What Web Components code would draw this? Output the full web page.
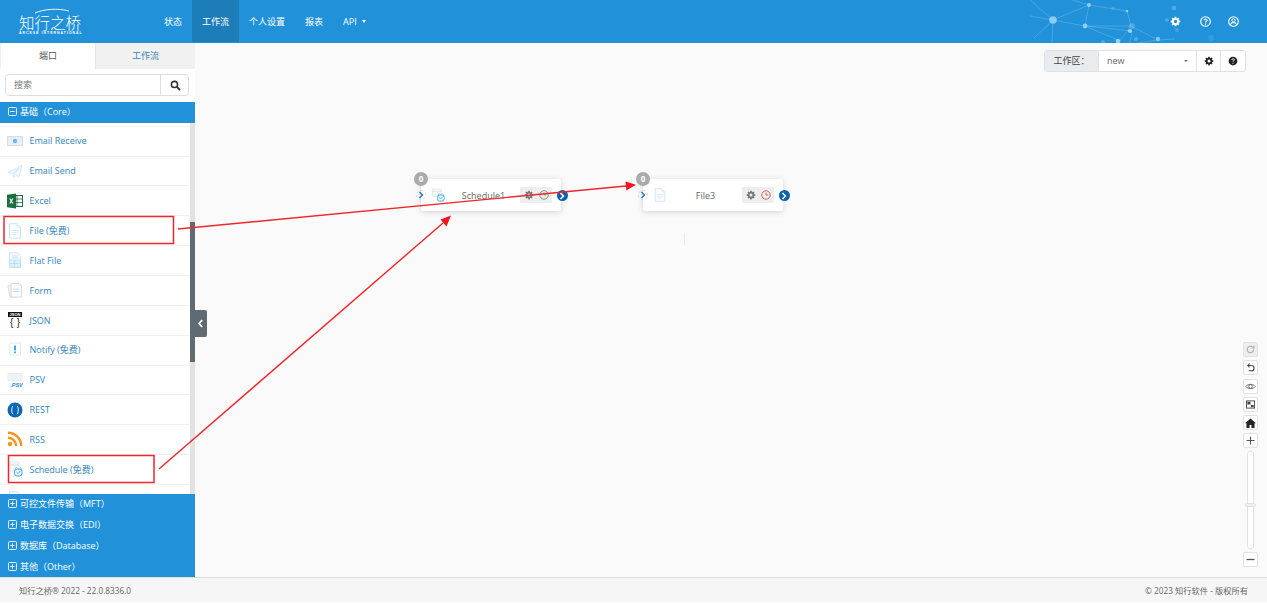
<!DOCTYPE html>
<html lang="zh">
<head>
<meta charset="utf-8">
<title>知行之桥</title>
<style>
    html, body { margin: 0; height: 603px; overflow: hidden; background: #fff; }
    body { font-family: "Open Sans", "Noto Sans CJK SC", sans-serif; font-size: 9px; }
    app-shell { height: 602px; }
</style>
</head>
<body>
<app-shell>
    <app-header slot="header"></app-header>
    <side-panel slot="side">
        <group-head open>基础（Core）</group-head>
        <tool-list slot="list">
            <tool-item icon="receive">Email Receive</tool-item>
            <tool-item icon="send">Email Send</tool-item>
            <tool-item icon="excel">Excel</tool-item>
            <tool-item icon="file">File (免费)</tool-item>
            <tool-item icon="flat">Flat File</tool-item>
            <tool-item icon="form">Form</tool-item>
            <tool-item icon="json">JSON</tool-item>
            <tool-item icon="notify">Notify (免费)</tool-item>
            <tool-item icon="psv">PSV</tool-item>
            <tool-item icon="rest">REST</tool-item>
            <tool-item icon="rss">RSS</tool-item>
            <tool-item icon="schedule">Schedule (免费)</tool-item>
            <tool-item icon="flat"></tool-item>
        </tool-list>
        <group-head slot="bottom">可控文件传输（MFT）</group-head>
        <group-head slot="bottom">电子数据交换（EDI）</group-head>
        <group-head slot="bottom">数据库（Database）</group-head>
        <group-head slot="bottom">其他（Other）</group-head>
    </side-panel>
    <flow-canvas slot="main">
        <flow-node style="left:226px;top:136px" icon="schedule" clock="#6f9f78">Schedule1</flow-node>
        <flow-node style="left:448px;top:136px" icon="file" clock="#d0646a">File3</flow-node>
    </flow-canvas>
    <app-footer slot="footer"></app-footer>
</app-shell>
<red-notes></red-notes>

<script>
const ICONS = {
    gear: `<path fill="currentColor" fill-rule="evenodd" d="M6.900 1h2.200l.3 1.900 1.200.5 1.600-1.100 1.500 1.500-1.100 1.600.5 1.200 1.900.3v2.200l-1.900.3-.5 1.200 1.100 1.600-1.500 1.500-1.600-1.100-1.200.5-.3 1.900H6.900l-.3-1.900-1.200-.5-1.600 1.100-1.500-1.500 1.100-1.600-.5-1.200L1 9.100V6.900l1.900-.3.5-1.200-1.100-1.600 1.500-1.500 1.600 1.100 1.200-.5zM8 5.600a2.400 2.400 0 1 0 0 4.800 2.400 2.400 0 0 0 0-4.800z"/>`,
    help: `<circle cx="8" cy="8" r="7" fill="currentColor"/><path d="M5.900 6.200c.2-1.200 1-1.800 2.100-1.800 1.200 0 2.100.7 2.100 1.800 0 1.600-2.100 1.500-2.100 3" fill="none" stroke="#fff" stroke-width="1.500"/><circle cx="8" cy="11.500" r=".9" fill="#fff"/>`,
    receive: `<rect x=".5" y="3.500" width="15" height="9" fill="#e8f1f7" stroke="#d5dde2"/><circle cx="8" cy="8" r="2.200" fill="#6dbbe9"/><path d="M.5 3.500 5 7M15.500 3.500 11 7" stroke="#e0e8ed" fill="none"/>`,
    send: `<path d="M15 2.500 1 9.500l4 1.500L12 5.500 6.500 12v2.500L9 12.500l3 1z" fill="#f4f9fc" stroke="#c6e2f1" stroke-width=".8"/>`,
    excel: `<rect x="5" y="2.500" width="10.500" height="11" fill="#fff" stroke="#1d6f42"/><path d="M5 6h10M5 9.500h10M10 2.500v11" stroke="#1d6f42" stroke-width=".8"/><path d="M0 1.800 9 .5v15L0 14.200z" fill="#1d6f42"/><path d="m2.800 5.500 3 5M5.800 5.500l-3 5" stroke="#fff" stroke-width="1.100"/>`,
    file: `<path d="M2.500.8h7.500l3.500 3.500v10.900h-11z" fill="#fdfeff" stroke="#c6e6f7"/><path d="M10 .8v3.500h3.500M4.500 7.500h7M4.500 9.500h7M4.500 11.500h5" fill="none" stroke="#d4ebf9" stroke-width=".9"/>`,
    flat: `<path d="M2.500.8h8l3 3v11.400h-11z" fill="#f7fbfe" stroke="#cbe6f6"/><path d="M2.500 8h11v7.200h-11zM2.500 11.500h11M7.500 8v7.200M5 4h6M5 6h6" fill="#dff1fb" stroke="#b4ddf3" stroke-width=".8"/>`,
    form: `<path d="M.8 4 7 1.500l7 1v12L3 15.300z" fill="#f1f3f4" stroke="#d5d9dc" stroke-width=".8"/><path d="M4 1.500h8l2.500 2.500v11H4z" fill="#fbfcfc" stroke="#cfd6da" stroke-width=".8"/><path d="M6 7h6M6 9.500h6" stroke="#cfe6f4"/>`,
    json: `<rect x="1" y="0" width="14" height="5" fill="#111"/><text x="8" y="4.200" font-size="4" font-weight="700" text-anchor="middle" fill="#fff" font-family="Liberation Sans">JSON</text><text x="4.600" y="13.800" font-size="10" text-anchor="middle" fill="#222" font-family="Liberation Sans">{</text><text x="11.400" y="13.800" font-size="10" text-anchor="middle" fill="#222" font-family="Liberation Sans">}</text>`,
    notify: `<path d="M2.500 1h11v12H10l-2 2-2-2H2.500z" fill="#fcfdfe" stroke="#e6ebef"/><rect x="7.200" y="3.500" width="1.600" height="5" fill="#1f93dc"/><rect x="7.200" y="9.500" width="1.600" height="1.700" fill="#1f93dc"/>`,
    psv: `<rect x=".5" y="1" width="15" height="8" fill="#e9edf1"/><path d="M.5 3h15M.5 5h15M.5 7h15" stroke="#fff" stroke-width=".7"/><text x="9.500" y="14.500" font-size="5.500" font-weight="700" font-style="italic" text-anchor="middle" fill="#2b8ed4" font-family="Liberation Sans">.PSV</text>`,
    rest: `<circle cx="8" cy="8" r="7.500" fill="#0c66b3"/><path d="M5.800 3.800C4.300 6 4.300 10 5.800 12.200M10.200 3.800c1.500 2.200 1.500 6.200 0 8.400" fill="none" stroke="#fff" stroke-width=".9"/>`,
    rss: `<circle cx="3" cy="13" r="2.200" fill="#f7931e"/><path d="M1 6.800A8.200 8.200 0 0 1 9.200 15M1 1.800A13.200 13.200 0 0 1 14.200 15" fill="none" stroke="#f7931e" stroke-width="2.500"/>`,
    schedule: `<path d="M1.500 1h10.500v3H1.500zM1.500 4h10.500v6H1.500z" fill="#f4f6f8" stroke="#e0e5e9" stroke-width=".8"/><rect x="7.500" y="8" width="7.500" height="7" rx="2.500" fill="#eaf6fd" stroke="#36a2e2"/><path d="M8 7.500 9.500 6.500M14.500 7.500 13 6.500M9.500 11l1.600 1.500L13.200 10" fill="none" stroke="#36a2e2" stroke-width=".8"/>`
}

function icon (name, size = 16) {
    return `<svg width="${size}" height="${size}" viewBox="0 0 16 16">${ICONS[name] || ""}</svg>`
}

class AppShell extends HTMLElement {
    constructor () {
        super()
        this.root = this.attachShadow({mode: "open"})
        this.root.innerHTML = `
        <style>
            :host {
                display: grid;
                grid-template-columns: 195px 1fr;
                grid-template-rows: 43px 1fr 25px;
            }
            .top, .bottom { grid-column: 1 / 3; min-width: 0; }
            .side, .main { min-height: 0; min-width: 0; display: flex; }
        </style>
        <div class="top"><slot name="header"></slot></div>
        <div class="side"><slot name="side"></slot></div>
        <div class="main"><slot name="main"></slot></div>
        <div class="bottom"><slot name="footer"></slot></div>
        `
    }
}

class AppHeader extends HTMLElement {
    constructor () {
        super()
        this.root = this.attachShadow({mode: "open"})
        this.root.innerHTML = `
        <style>
            :host {
                display: flex;
                position: relative;
                height: 43px;
                background: #2192d9;
                color: #fff;
                overflow: hidden;
            }
            .logo {
                width: 154px;
                position: relative;
                flex: none;
            }
            .logo svg { position: absolute; left: 34px; top: 8px; }
            .logo b {
                position: absolute;
                left: 19px;
                top: 11px;
                font: 300 15.500px/22px "Noto Sans CJK SC", sans-serif;
                white-space: nowrap;
            }
            .logo i {
                position: absolute;
                left: 19px;
                top: 31px;
                font: normal 700 3.400px/4px "Liberation Sans", sans-serif;
                letter-spacing: 1.050px;
                white-space: nowrap;
            }
            nav { display: flex; }
            nav a {
                display: flex;
                align-items: center;
                gap: 5px;
                padding: 0 10px;
                font-size: 9px;
                margin-bottom: 1px;
            }
            nav a.on { background: #1c7db9; }
            nav a span {
                border-top: 3px solid #fff;
                border-left: 2.500px solid transparent;
                border-right: 2.500px solid transparent;
            }
            .net { position: absolute; left: 1020px; top: 0; }
            .tools {
                margin-left: auto;
                display: flex;
                align-items: center;
                padding: 0 28.500px 0 0;
                position: relative;
            }
            .tools svg { display: block; }
            .tools svg + svg { margin-left: 19px; }
            .tools svg + svg + svg { margin-left: 17px; }
        </style>
        <div class="logo">
            <svg width="36" height="6" viewBox="0 0 36 6"><path d="M1 5C10 1 24 0 35 3" fill="none" stroke="#fff" stroke-width=".9"/></svg>
            <b>知行之桥</b>
            <i>ARCESB INTERNATIONAL</i>
        </div>
        <nav>
            <a>状态</a>
            <a class="on">工作流</a>
            <a>个人设置</a>
            <a>报表</a>
            <a>API <span></span></a>
        </nav>
        <svg class="net" width="200" height="43" viewBox="1020 0 200 43">
            <g stroke="#9fd3f2" stroke-opacity=".38" stroke-width=".8" fill="none">
                <path d="M1030 0 1053 20 1089 5 1085 26 1053 20 1052 43M1089 5 1127 11M1085 26 1131 26 1118 43M1085 26 1118 40M1085 26 1132 31 1130 43M1053 20 1030 16M1053 20 1034 38M1072 0 1089 5M1131 26 1158 40 1175 39M1158 40 1138 43M1131 26 1127 11"/>
            </g>
            <g fill="#a8dafa">
                <circle cx="1053" cy="20" r="3.800" opacity=".75"/>
                <circle cx="1089" cy="5" r="2" opacity=".8"/>
                <circle cx="1085" cy="26" r="2.400" opacity=".8"/>
                <circle cx="1127" cy="11" r="1.300" opacity=".8"/>
                <circle cx="1113" cy="8" r="1.800" opacity=".25"/>
                <circle cx="1132" cy="26" r="3" opacity=".3"/>
                <circle cx="1130" cy="31" r="2" opacity=".9"/>
                <circle cx="1118" cy="41" r="2.300" opacity=".85"/>
                <circle cx="1158" cy="39" r="2.200" opacity=".7"/>
                <circle cx="1136" cy="39" r="2" opacity=".35"/>
                <circle cx="1103" cy="42" r="2" opacity=".3"/>
                <circle cx="1174" cy="8" r="2.300" opacity=".35"/>
                <circle cx="1167" cy="20" r="2" opacity=".3"/>
                <circle cx="1177" cy="30" r="2" opacity=".25"/>
                <circle cx="1211" cy="38" r="3" opacity=".15"/>
            </g>
        </svg>
        <div class="tools">
            ${icon("gear", 11)}
            <svg width="11" height="11" viewBox="0 0 16 16"><circle cx="8" cy="8" r="7" fill="none" stroke="#fff" stroke-width="1.600"/><path d="M5.700 6.300C5.900 5 6.800 4.400 8 4.400c1.300 0 2.300.7 2.300 1.900 0 1.700-2.300 1.600-2.300 3.100" fill="none" stroke="#fff" stroke-width="1.500"/><circle cx="8" cy="11.700" r="1" fill="#fff"/></svg>
            <svg width="11" height="11" viewBox="0 0 16 16"><circle cx="8" cy="8" r="7" fill="none" stroke="#fff" stroke-width="1.600"/><circle cx="8" cy="6.300" r="2.400" fill="none" stroke="#fff" stroke-width="1.400"/><path d="M3.500 12.500c1-2.200 2.700-2.900 4.500-2.900s3.500.7 4.500 2.900" fill="none" stroke="#fff" stroke-width="1.500"/></svg>
        </div>
        `
    }
}

class SidePanel extends HTMLElement {
    constructor () {
        super()
        this.root = this.attachShadow({mode: "open"})
        this.root.innerHTML = `
        <style>
            :host {
                display: flex;
                flex-direction: column;
                width: 195px;
                background: #fff;
                position: relative;
                z-index: 2;
            }
            .tabs {
                display: flex;
                height: 26px;
                background: #f1f1f1;
                padding-left: 1px;
                flex: none;
            }
            .tabs a {
                flex: 1;
                display: flex;
                align-items: center;
                justify-content: center;
                font-size: 9px;
                color: #3c85b8;
                padding-bottom: 1px;
            }
            .tabs a.on {
                flex: none;
                width: 95px;
                background: #fff;
                color: #555;
                border-radius: 3px 3px 0 0;
                border-right: 1px solid #e4e4e4;
                box-sizing: border-box;
            }
            .search {
                display: flex;
                height: 22px;
                margin: 5px 6px 6px 5px;
                border: 1px solid #dcdfe2;
                border-radius: 4px;
                box-sizing: border-box;
                flex: none;
                font-size: 9px;
                color: #777;
            }
            .search span { flex: 1; padding-left: 8px; line-height: 20px; }
            .search button {
                width: 28px;
                border: 0;
                border-left: 1px solid #dcdfe2;
                background: none;
                padding: 0 0 0 1px;
                display: flex;
                align-items: center;
                justify-content: center;
            }
            .body { flex: 1; min-height: 0; display: flex; flex-direction: column; }
            .handle {
                position: absolute;
                left: 190px;
                top: 267px;
                width: 17px;
                height: 27px;
                background: #5f6b73;
                border-radius: 0 2px 2px 0;
                display: flex;
                align-items: center;
                justify-content: flex-end;
                padding-right: 3px;
                box-sizing: border-box;
            }
        </style>
        <div class="tabs"><a class="on">端口</a><a>工作流</a></div>
        <div class="search">
            <span>搜索</span>
            <button><svg width="11" height="11" viewBox="0 0 16 16"><circle cx="6.500" cy="6.500" r="4.500" fill="none" stroke="#333" stroke-width="2.200"/><path d="m10 10 4.500 4.500" stroke="#333" stroke-width="2.800"/></svg></button>
        </div>
        <div class="body">
            <slot></slot>
            <slot name="list"></slot>
            <slot name="bottom"></slot>
        </div>
        <div class="handle"><svg width="7" height="9" viewBox="0 0 7 9"><path d="M5.200 1 2 4.500 5.200 8" fill="none" stroke="#fff" stroke-width="1.700"/></svg></div>
        `
    }
}

class GroupHead extends HTMLElement {
    constructor () {
        super()
        this.root = this.attachShadow({mode: "open"})
    }

    connectedCallback () {
        this.render()
    }

    render () {
        const bar = this.hasAttribute("open") ? "" : `<path d="M5 2.600v4.800"/>`
        this.root.innerHTML = `
        <style>
            :host {
                display: flex;
                align-items: center;
                gap: 3.500px;
                box-sizing: border-box;
                height: 20.750px;
                padding: 0 0 1px 7.500px;
                background: #2192d9;
                color: #fff;
                font-size: 9px;
                flex: none;
                white-space: nowrap;
            }
            svg { flex: none; }
        </style>
        <svg width="9" height="9" viewBox="0 0 10 10" fill="none" stroke="#fff" stroke-width="1"><rect x=".6" y=".6" width="8.800" height="8.800" rx="1"/><path d="M2.600 5h4.800"/>${bar}</svg>
        <span><slot></slot></span>
        `
    }
}

class ToolList extends HTMLElement {
    constructor () {
        super()
        this.root = this.attachShadow({mode: "open"})
        this.root.innerHTML = `
        <style>
            :host {
                display: flex;
                flex: 1;
                min-height: 0;
                overflow: hidden;
            }
            .rows {
                flex: 1;
                min-width: 0;
                padding-top: 3px;
                display: flex;
                flex-direction: column;
            }
            .bar {
                width: 5px;
                background: #e2e2e2;
                flex: none;
            }
            .bar div {
                margin-top: 99px;
                height: 140px;
                background: #5f6b73;
            }
        </style>
        <div class="rows"><slot></slot></div>
        <div class="bar"><div></div></div>
        `
    }
}

class ToolItem extends HTMLElement {
    constructor () {
        super()
        this.root = this.attachShadow({mode: "open"})
    }

    connectedCallback () {
        this.root.innerHTML = `
        <style>
            :host {
                display: flex;
                align-items: center;
                flex: none;
                box-sizing: border-box;
                height: 29.850px;
                padding: 0 0 .4px 7px;
                gap: 6.500px;
                border-top: 1px solid #f1f1f1;
                color: #3384bb;
                font-size: 9px;
                white-space: nowrap;
            }
            svg { flex: none; }
        </style>
        ${icon(this.getAttribute("icon"), 16)}
        <span><slot></slot></span>
        `
    }
}

class FlowCanvas extends HTMLElement {
    constructor () {
        super()
        this.root = this.attachShadow({mode: "open"})
        this.root.innerHTML = `
        <style>
            :host {
                display: block;
                flex: 1;
                position: relative;
                background: #fafafa;
                color: #555;
                overflow: hidden;
            }
            .bar {
                display: flex;
                justify-content: flex-end;
                padding: 7px 21px 0 0;
            }
            .group {
                display: flex;
                height: 22px;
                border: 1px solid #dfe2e5;
                border-radius: 3px;
                box-sizing: border-box;
                background: #fff;
                font-size: 9px;
            }
            .group > * {
                display: flex;
                align-items: center;
                justify-content: center;
                border-left: 1px solid #dfe2e5;
                box-sizing: border-box;
                padding-bottom: 1px;
            }
            .label {
                width: 53px;
                background: #e9ecef;
                border-left: 0;
                color: #444;
            }
            .sel {
                width: 98px;
                justify-content: space-between;
                padding: 0 8px 1px;
                color: #666;
            }
            .sel i {
                border-top: 2.500px solid #666;
                border-left: 2px solid transparent;
                border-right: 2px solid transparent;
            }
            .btn { width: 24px; color: #222; }
            .btn + .btn { width: 25px; }
            .mark {
                position: absolute;
                left: 489px;
                top: 190px;
                width: 1px;
                height: 12px;
                background: #f1e8e6;
            }
            .zoom {
                position: absolute;
                right: 9px;
                top: 299px;
                width: 15px;
                display: flex;
                flex-direction: column;
                gap: 3.300px;
                align-items: center;
            }
            .zoom div {
                width: 15px;
                height: 15px;
                box-sizing: border-box;
                background: #fff;
                border: 1px solid #e2e2e2;
                border-radius: 2px;
                display: flex;
                align-items: center;
                justify-content: center;
                color: #444;
            }
            .zoom div.off { background: #eee; color: #aaa; }
            .zoom .track {
                width: 7px;
                height: 98px;
                border-radius: 3px;
                position: relative;
                margin: -.6px 0 0;
            }
            .zoom .track span {
                position: absolute;
                left: -3px;
                top: 51px;
                width: 11px;
                height: 4px;
                background: #f0f0f0;
                border: 1px solid #e2e2e2;
                border-radius: 2px;
                box-sizing: border-box;
            }
        </style>
        <div class="bar">
            <div class="group">
                <div class="label">工作区：</div>
                <div class="sel">new <i></i></div>
                <div class="btn">${icon("gear", 10)}</div>
                <div class="btn">${icon("help", 10)}</div>
            </div>
        </div>
        <div class="mark"></div>
        <slot></slot>
        <div class="zoom">
            <div class="off"><svg width="9" height="9" viewBox="0 0 10 10" fill="none" stroke="currentColor" stroke-width="1.200"><path d="M8.500 5a3.600 3.600 0 1 1-1.200-2.700"/><path d="M8.800 .8v2.600H6.200"/></svg></div>
            <div><svg width="9" height="9" viewBox="0 0 10 10" fill="none" stroke="currentColor" stroke-width="1.200"><path d="M2.500 2.800h3.600a2.900 2.900 0 0 1 0 5.800H3"/><path d="M4 .8 2 2.800l2 2"/></svg></div>
            <div><svg width="11" height="9" viewBox="0 0 12 10" fill="none" stroke="#666" stroke-width="1"><path d="M.8 5C3 1.800 9 1.800 11.200 5 9 8.200 3 8.200.8 5z"/><circle cx="6" cy="5" r="2"/></svg></div>
            <div><svg width="9" height="9" viewBox="0 0 10 10"><rect x=".5" y="1" width="9" height="8" fill="none" stroke="#444"/><rect x="1.500" y="2" width="3.500" height="3" fill="#444"/><rect x="5.500" y="5.500" width="3" height="2.500" fill="#444"/></svg></div>
            <div><svg width="11" height="10" viewBox="0 0 11 10" fill="#222"><path d="M5.500.5 0 5.300h1.500V10h3V7h2v3h3V5.300H11z"/></svg></div>
            <div><svg width="9" height="9" viewBox="0 0 9 9" stroke="#555" stroke-width="1.100"><path d="M4.500 .5v8M.5 4.500h8"/></svg></div>
            <div class="track"><span></span></div>
            <div><svg width="9" height="9" viewBox="0 0 9 9" stroke="#555" stroke-width="1.300"><path d="M.5 4.500h8"/></svg></div>
        </div>
        `
    }
}

class FlowNode extends HTMLElement {
    constructor () {
        super()
        this.root = this.attachShadow({mode: "open"})
    }

    connectedCallback () {
        const clock = this.getAttribute("clock")
        this.root.innerHTML = `
        <style>
            :host {
                position: absolute;
                display: flex;
                align-items: center;
                box-sizing: border-box;
                width: 140px;
                height: 32px;
                background: #fff;
                border-radius: 3px;
                box-shadow: 0 1px 6px rgba(0,0,0,.16);
                font-size: 9px;
                color: #666;
            }
            .count {
                position: absolute;
                left: -7px;
                top: -7px;
                width: 14px;
                height: 14px;
                border-radius: 50%;
                background: #aaa;
                color: #fff;
                font-size: 8px;
                font-weight: 700;
                text-align: center;
                line-height: 14px;
            }
            .in {
                position: absolute;
                left: -5px;
                top: 11px;
                width: 10px;
                height: 10px;
                border-radius: 50%;
                border: 1px dashed #d9dde0;
                box-sizing: border-box;
                display: flex;
                align-items: center;
                justify-content: center;
            }
            .out {
                position: absolute;
                right: -6.500px;
                top: 11px;
                width: 11px;
                height: 11px;
                border-radius: 50%;
                background: #0d62ae;
                display: flex;
                align-items: center;
                justify-content: center;
            }
            .kind { margin-left: 10px; display: flex; flex: none; }
            .title { flex: 1; text-align: center; padding-left: 2px; }
            .acts {
                display: flex;
                align-items: center;
                justify-content: space-around;
                width: 32px;
                height: 16px;
                margin-right: 9px;
                padding-left: 1px;
                box-sizing: border-box;
                background: #eee;
                border-radius: 1px;
                flex: none;
            }
            svg { display: block; }
        </style>
        <div class="count">0</div>
        <div class="in"><svg width="6" height="8" viewBox="0 0 6 8"><path d="M1.500 1 4.500 4 1.500 7" fill="none" stroke="#1d6db5" stroke-width="1.300"/></svg></div>
        <div class="kind">${icon(this.getAttribute("icon"), 14)}</div>
        <div class="title"><slot></slot></div>
        <div class="acts">
            <span style="color:#777">${icon("gear", 10)}</span>
            <svg width="10" height="10" viewBox="0 0 10 10" fill="none" stroke="${clock}" stroke-width="1"><circle cx="5" cy="5" r="4.200"/><path d="M5 2.500V5h2.300"/></svg>
        </div>
        <div class="out"><svg width="6" height="8" viewBox="0 0 6 8"><path d="M1.500 1 4.500 4 1.500 7" fill="none" stroke="#fff" stroke-width="1.500"/></svg></div>
        `
    }
}

class AppFooter extends HTMLElement {
    constructor () {
        super()
        this.root = this.attachShadow({mode: "open"})
        this.root.innerHTML = `
        <style>
            :host {
                display: flex;
                justify-content: space-between;
                align-items: center;
                height: 25px;
                box-sizing: border-box;
                padding: 0 19px;
                background: #f6f6f6;
                border-top: 1px solid #ddd;
                color: #666;
                font-size: 8.250px;
            }
        </style>
        <span>知行之桥® 2022 - 22.0.8336.0</span>
        <span>© 2023 知行软件 - 版权所有</span>
        `
    }
}

class RedNotes extends HTMLElement {
    constructor () {
        super()
        this.root = this.attachShadow({mode: "open"})
        this.root.innerHTML = `
        <style>
            :host {
                position: absolute;
                left: 0;
                top: 0;
                z-index: 5;
                pointer-events: none;
            }
            svg { display: block; }
        </style>
        <svg width="1267" height="603" viewBox="0 0 1267 603" fill="none" stroke="#f0262c">
            <rect x="4" y="216.500" width="169.500" height="27" stroke-width="1.500"/>
            <rect x="8.500" y="455.500" width="145.500" height="27" stroke-width="1.500"/>
            <path d="M178 229 626 186" stroke-width="1.400"/>
            <path d="M636 184.800 625.500 181.500 626.300 190.500z" fill="#f8141c" stroke="none"/>
            <path d="M159 469 443 223" stroke-width="1.400"/>
            <path d="M451 215.500 440.500 219.500 446.500 226.500z" fill="#f8141c" stroke="none"/>
        </svg>
        `
    }
}

customElements.define("app-shell", AppShell)
customElements.define("app-header", AppHeader)
customElements.define("side-panel", SidePanel)
customElements.define("group-head", GroupHead)
customElements.define("tool-list", ToolList)
customElements.define("tool-item", ToolItem)
customElements.define("flow-canvas", FlowCanvas)
customElements.define("flow-node", FlowNode)
customElements.define("app-footer", AppFooter)
customElements.define("red-notes", RedNotes)
</script>
</body>
</html>
